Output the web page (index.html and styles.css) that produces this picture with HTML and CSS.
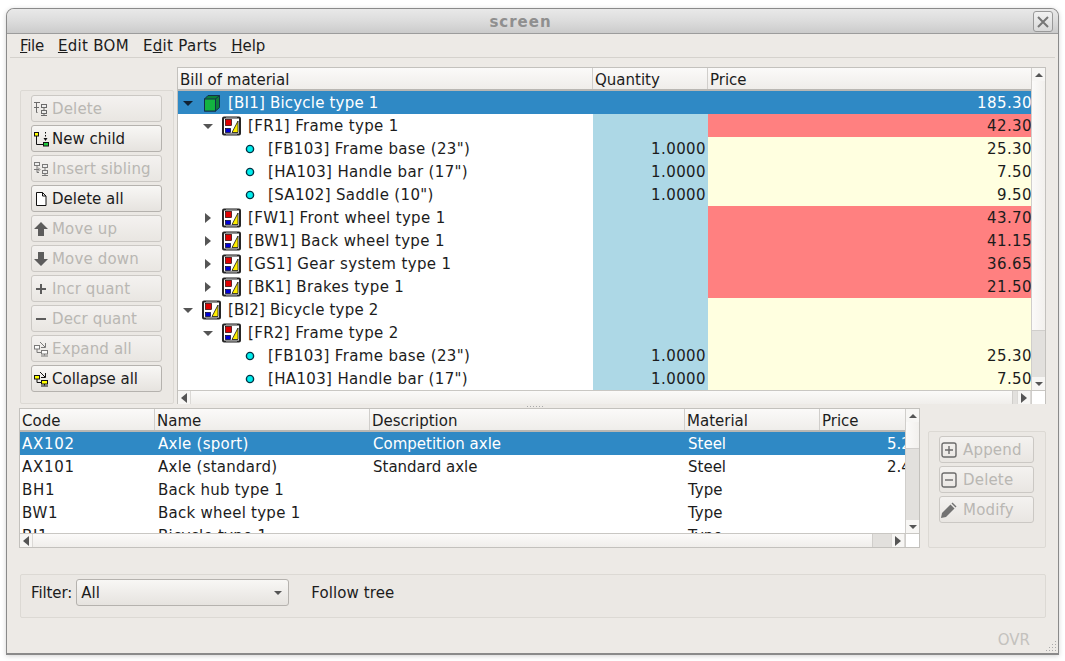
FILE: index.html
```html
<!DOCTYPE html>
<html lang="en">
<head>
  <meta charset="UTF-8">
  <title>screen</title>
  <link rel="stylesheet" href="styles.css">
</head>
<body>
  <svg class="defs" width="0" height="0">
    <symbol id="i-part" viewBox="0 0 20 20">
      <rect x="1" y="1.500" width="17" height="17" rx="1" fill="#fff" stroke="#262626" stroke-width="2"/>
      <path d="M4 1h11M4 19h11" stroke="#8a8a8a" stroke-width="1.500"/>
      <rect x="3.500" y="3.500" width="6" height="6" fill="#e00000" stroke="#200" stroke-width=".7"/>
      <rect x="3.500" y="12.500" width="5" height="4" fill="#0000d8" stroke="#002" stroke-width=".7"/>
      <path d="M16 5v11.500h-6z" fill="#ffee00" stroke="#111" stroke-width=".8"/>
    </symbol>
    <symbol id="i-cube" viewBox="-2 -2 20 20">
      <path d="M.5 4 4 .5h11.500v12L11.500 16H.5z" fill="#0c7f3a" stroke="#12304a" stroke-width="1"/>
      <rect x=".5" y="4" width="11" height="12" fill="#13b341" stroke="#12304a" stroke-width="1"/>
      <path d="M11.500 4 15.500 .5" stroke="#12304a"/>
    </symbol>
    <symbol id="i-dot" viewBox="0 0 10 10">
      <circle cx="5" cy="5" r="3.600" fill="#0ee" stroke="#034" stroke-width="1.400"/>
    </symbol>
    <symbol id="i-tree-del" viewBox="0 0 16 16">
      <path d="M1 1.500h6M3.500 1.500v10h1M1 6.500h5" fill="none" stroke="#555"/>
      <rect x="8.500" y="3.500" width="5" height="3" fill="#eee" stroke="#555"/>
      <rect x="8.500" y="9.500" width="5" height="3" fill="#eee" stroke="#555"/>
      <path d="M11 6.500v3M11 12.500v1.500M8 14.500h6" stroke="#555"/>
    </symbol>
    <symbol id="i-tree-child" viewBox="0 0 16 16">
      <path d="M3.500 5v8.500H10" fill="none" stroke="#111"/>
      <rect x="1.500" y="1.500" width="4" height="3.500" fill="#ff0" stroke="#111"/>
      <rect x="10.500" y="11.500" width="5" height="3.500" fill="#1ec83c" stroke="#111"/>
      <path d="M12.500 1v1.500M12.500 4v1.500" stroke="#111"/>
      <path d="M10.500 7h4l-2 3z" fill="#111"/>
    </symbol>
    <symbol id="i-tree-sib" viewBox="0 0 16 16">
      <rect x="1.500" y="1.500" width="5" height="3" fill="#eee" stroke="#666"/>
      <path d="M4 4.500v7h2M1 8.500h5M5 6.500l2 2-2 2" fill="none" stroke="#666"/>
      <rect x="9.500" y="3.500" width="5" height="3" fill="#eee" stroke="#666"/>
      <rect x="9.500" y="9.500" width="5" height="3" fill="#eee" stroke="#666"/>
      <path d="M12 6.500v3M12 12.500v1.500M9 14.500h6" stroke="#666"/>
    </symbol>
    <symbol id="i-page" viewBox="0 0 16 16">
      <path d="M3.500 1.500h6l3.500 3.500v9.500H3.500zM9.500 1.500V5H13" fill="#fff" stroke="#111"/>
    </symbol>
    <symbol id="i-up" viewBox="0 0 16 16">
      <path d="M8 1 15 8h-4v7H5V8H1z" fill="#444"/>
    </symbol>
    <symbol id="i-down" viewBox="0 0 16 16">
      <path d="M8 15 15 8h-4V1H5v7H1z" fill="#444"/>
    </symbol>
    <symbol id="i-plus" viewBox="0 0 16 16">
      <path d="M7 3h2v4h4v2H9v4H7V9H3V7h4z" fill="#444"/>
    </symbol>
    <symbol id="i-minus" viewBox="0 0 16 16">
      <rect x="3" y="7" width="10" height="2" fill="#444"/>
    </symbol>
    <symbol id="i-expand" viewBox="0 0 16 16">
      <rect x="1.500" y="4.500" width="5" height="3.500" fill="var(--top)" stroke="currentColor"/>
      <rect x="8.500" y="9.500" width="6" height="3.500" fill="var(--bot)" stroke="currentColor"/>
      <path d="M4 8v3.500h4.500M11.500 13v1.500M8 15h7M7 1l5 5M12.500 2v4.500H8" fill="none" stroke="currentColor"/>
    </symbol>
    <symbol id="i-box-plus" viewBox="0 0 16 16">
      <rect x="1" y="1" width="14" height="14" rx="2" fill="none" stroke="#555" stroke-width="1.400"/>
      <path d="M8 4v8M4 8h8" stroke="#555" stroke-width="1.400"/>
    </symbol>
    <symbol id="i-box-minus" viewBox="0 0 16 16">
      <rect x="1" y="1" width="14" height="14" rx="2" fill="none" stroke="#555" stroke-width="1.400"/>
      <path d="M4 8h8" stroke="#555" stroke-width="1.400"/>
    </symbol>
    <symbol id="i-pencil" viewBox="0 0 16 16">
      <path d="M0 16l1-5 8.500-8.500 4 4L5 15z" fill="#5e5e5e"/>
      <path d="M10.500 1.500l1-1 4 4-1 1z" fill="#5e5e5e"/>
    </symbol>
  </svg>

  <div class="window">
    <div class="titlebar">
      <span class="title">screen</span>
      <span class="close">
        <svg width="12" height="12" viewBox="0 0 12 12"><path d="M1 1l10 10M11 1 1 11" stroke="#777" stroke-width="2"/></svg>
      </span>
    </div>

    <div class="menubar">
      <span class="tight"><u>F</u>ile</span>
      <span class="wide"><u>E</u>dit BOM</span>
      <span class="wide">E<u>d</u>it Parts</span>
      <span><u>H</u>elp</span>
    </div>

    <div class="top-area">
      <div class="panel side-tools">
        <button class="btn" disabled><svg class="ic"><use href="#i-tree-del"/></svg>Delete</button>
        <button class="btn"><svg class="ic"><use href="#i-tree-child"/></svg>New child</button>
        <button class="btn" disabled><svg class="ic"><use href="#i-tree-sib"/></svg>Insert sibling</button>
        <button class="btn"><svg class="ic"><use href="#i-page"/></svg>Delete all</button>
        <button class="btn" disabled><svg class="ic"><use href="#i-up"/></svg>Move up</button>
        <button class="btn" disabled><svg class="ic"><use href="#i-down"/></svg>Move down</button>
        <button class="btn" disabled><svg class="ic"><use href="#i-plus"/></svg>Incr quant</button>
        <button class="btn" disabled><svg class="ic"><use href="#i-minus"/></svg>Decr quant</button>
        <button class="btn" disabled><svg class="ic tree-off"><use href="#i-expand"/></svg>Expand all</button>
        <button class="btn"><svg class="ic tree-yellow"><use href="#i-expand"/></svg>Collapse all</button>
      </div>

      <div class="frame bom">
        <div class="head bom-cols">
          <div>Bill of material</div>
          <div>Quantity</div>
          <div>Price</div>
        </div>
        <div class="vbar bom-vbar">
          <div class="sb-btn"><i class="arr up"></i></div>
          <div class="sb-track"><div class="sb-thumb bom-thumb"></div></div>
          <div class="sb-btn"><i class="arr down"></i></div>
        </div>
        <div class="rows bom-rows">
          <div class="row bom-cols selected">
            <div class="name lv0"><i class="arr down dark"></i><svg class="node"><use href="#i-cube"/></svg>[BI1] Bicycle type 1</div>
            <div class="num"></div>
            <div class="num">185.30</div>
          </div>
          <div class="row bom-cols">
            <div class="name lv1"><i class="arr down"></i><svg class="node"><use href="#i-part"/></svg>[FR1] Frame type 1</div>
            <div class="num qty"></div>
            <div class="num red">42.30</div>
          </div>
          <div class="row bom-cols">
            <div class="name lv2"><svg class="dot"><use href="#i-dot"/></svg>[FB103] Frame base (23")</div>
            <div class="num qty">1.0000</div>
            <div class="num yellow">25.30</div>
          </div>
          <div class="row bom-cols">
            <div class="name lv2"><svg class="dot"><use href="#i-dot"/></svg>[HA103] Handle bar (17")</div>
            <div class="num qty">1.0000</div>
            <div class="num yellow">7.50</div>
          </div>
          <div class="row bom-cols">
            <div class="name lv2"><svg class="dot"><use href="#i-dot"/></svg>[SA102] Saddle (10")</div>
            <div class="num qty">1.0000</div>
            <div class="num yellow">9.50</div>
          </div>
          <div class="row bom-cols">
            <div class="name lv1"><i class="arr right"></i><svg class="node"><use href="#i-part"/></svg>[FW1] Front wheel type 1</div>
            <div class="num qty"></div>
            <div class="num red">43.70</div>
          </div>
          <div class="row bom-cols">
            <div class="name lv1"><i class="arr right"></i><svg class="node"><use href="#i-part"/></svg>[BW1] Back wheel type 1</div>
            <div class="num qty"></div>
            <div class="num red">41.15</div>
          </div>
          <div class="row bom-cols">
            <div class="name lv1"><i class="arr right"></i><svg class="node"><use href="#i-part"/></svg>[GS1] Gear system type 1</div>
            <div class="num qty"></div>
            <div class="num red">36.65</div>
          </div>
          <div class="row bom-cols">
            <div class="name lv1"><i class="arr right"></i><svg class="node"><use href="#i-part"/></svg>[BK1] Brakes type 1</div>
            <div class="num qty"></div>
            <div class="num red">21.50</div>
          </div>
          <div class="row bom-cols">
            <div class="name lv0"><i class="arr down"></i><svg class="node"><use href="#i-part"/></svg>[BI2] Bicycle type 2</div>
            <div class="num qty"></div>
            <div class="num yellow"></div>
          </div>
          <div class="row bom-cols">
            <div class="name lv1"><i class="arr down"></i><svg class="node"><use href="#i-part"/></svg>[FR2] Frame type 2</div>
            <div class="num qty"></div>
            <div class="num yellow"></div>
          </div>
          <div class="row bom-cols">
            <div class="name lv2"><svg class="dot"><use href="#i-dot"/></svg>[FB103] Frame base (23")</div>
            <div class="num qty">1.0000</div>
            <div class="num yellow">25.30</div>
          </div>
          <div class="row bom-cols">
            <div class="name lv2"><svg class="dot"><use href="#i-dot"/></svg>[HA103] Handle bar (17")</div>
            <div class="num qty">1.0000</div>
            <div class="num yellow">7.50</div>
          </div>
        </div>
        <div class="hbar">
          <div class="sb-btn"><i class="arr left"></i></div>
          <div class="sb-track"><div class="sb-thumb bom-hthumb"></div></div>
          <div class="sb-btn"><i class="arr right"></i></div>
          <div class="sb-corner"></div>
        </div>
      </div>
    </div>

    <div class="splitter"><span></span><span></span><span></span><span></span><span></span><span></span></div>

    <div class="mid-area">
      <div class="frame parts">
        <div class="head parts-cols">
          <div>Code</div>
          <div>Name</div>
          <div>Description</div>
          <div>Material</div>
          <div>Price</div>
        </div>
        <div class="vbar parts-vbar">
          <div class="sb-btn"><i class="arr up"></i></div>
          <div class="sb-track"><div class="sb-thumb parts-thumb"></div></div>
          <div class="sb-btn"><i class="arr down"></i></div>
        </div>
        <div class="rows parts-rows">
          <div class="row parts-cols selected">
            <div class="code">AX102</div><div class="pname">Axle (sport)</div><div>Competition axle</div><div>Steel</div><div class="clip-num">5.20</div>
          </div>
          <div class="row parts-cols">
            <div class="code">AX101</div><div class="pname">Axle (standard)</div><div>Standard axle</div><div>Steel</div><div class="clip-num">2.40</div>
          </div>
          <div class="row parts-cols">
            <div class="code">BH1</div><div class="pname">Back hub type 1</div><div></div><div>Type</div><div></div>
          </div>
          <div class="row parts-cols">
            <div class="code">BW1</div><div class="pname">Back wheel type 1</div><div></div><div>Type</div><div></div>
          </div>
          <div class="row parts-cols">
            <div class="code">BI1</div><div class="pname">Bicycle type 1</div><div></div><div>Type</div><div></div>
          </div>
        </div>
        <div class="hbar">
          <div class="sb-btn"><i class="arr left"></i></div>
          <div class="sb-track"><div class="sb-thumb parts-hthumb"></div></div>
          <div class="sb-btn"><i class="arr right"></i></div>
          <div class="sb-corner"></div>
        </div>
      </div>

      <div class="panel part-tools">
        <button class="btn" disabled><svg class="ic"><use href="#i-box-plus"/></svg>Append</button>
        <button class="btn" disabled><svg class="ic"><use href="#i-box-minus"/></svg>Delete</button>
        <button class="btn" disabled><svg class="ic"><use href="#i-pencil"/></svg>Modify</button>
      </div>
    </div>

    <div class="panel filter">
      <label class="filter-label">Filter:</label>
      <div class="combo"><span>All</span><i class="arr down"></i></div>
      <span class="follow">Follow tree</span>
    </div>

    <div class="statusbar">
      <span class="ovr">OVR</span>
      <svg class="grip" width="12" height="12" viewBox="0 0 12 12">
        <path d="M10 1h1v1h-1zM10 4h1v1h-1zM7 4h1v1H7zM10 7h1v1h-1zM7 7h1v1H7zM4 7h1v1H4zM10 10h1v1h-1zM7 10h1v1H7zM4 10h1v1H4zM1 10h1v1H1z" fill="#aaa"/>
      </svg>
    </div>
  </div>
</body>
</html>
```

FILE: styles.css
```css
* {
  box-sizing: border-box;
}

html, body {
  margin: 0;
  height: 100%;
  background: #fff;
  overflow: hidden;
}

body {
  padding: 8px 6px 6px 6px;
  font-family: "DejaVu Sans", sans-serif;
  font-size: 15px;
  color: #1c1c1c;
}

.defs {
  position: absolute;
}

.window {
  width: 1053px;
  height: 647px;
  background: #edeae6;
  border: 1px solid #8a8a8a;
  border-bottom-width: 2px;
  border-radius: 8px 8px 0 0;
  box-shadow: 0 1px 5px rgba(0,0,0,0.18);
  display: flex;
  flex-direction: column;
  overflow: hidden;
}

.titlebar {
  height: 25px;
  flex: none;
  padding: 1px 24px 0 0;
  display: flex;
  align-items: center;
  justify-content: center;
  position: relative;
  background: linear-gradient(#e9e9e9, #dcdcdc 50%, #cbcbcb);
  border-bottom: 1px solid #9c9c9c;
}

.title {
  color: #8f8f8f;
  font-weight: bold;
  font-size: 15px;
  letter-spacing: 1px;
}

.close {
  position: absolute;
  right: 5px;
  top: 2px;
  width: 20px;
  height: 21px;
  border: 1px solid #999;
  border-radius: 3px;
  background: linear-gradient(#f1f1f1, #d9d9d9);
  display: flex;
  align-items: center;
  justify-content: center;
}

.menubar {
  height: 24px;
  flex: none;
  margin: 0 3px;
  padding-left: 10px;
  display: flex;
  align-items: center;
  gap: 14px;
  border-bottom: 1px solid #d5d2cd;
}

.tight {
  letter-spacing: -0.3px;
}

.wide {
  letter-spacing: 0.3px;
}

.top-area {
  margin: 9px 12px 0 13px;
  display: flex;
  align-items: flex-end;
  gap: 3px;
}

.panel {
  background: #ebe8e4;
  border: 1px solid #dcd9d4;
  border-radius: 2px;
}

.side-tools {
  width: 154px;
  height: 314px;
  padding: 4px 11px 4px 10px;
  display: flex;
  flex-direction: column;
  gap: 3px;
}

.btn {
  height: 27px;
  flex: none;
  display: flex;
  align-items: center;
  padding: 0 0 0 1px;
  font: inherit;
  color: #1c1c1c;
  background: linear-gradient(#f8f7f5, #e6e3df);
  border: 1px solid #b5b2ae;
  border-radius: 3px;
  text-align: left;
}

.btn:disabled {
  color: #b9b7b3;
  letter-spacing: 0.15px;
  border-color: #cbc8c4;
  background: linear-gradient(#f4f2f0, #e9e6e2);
}

.ic {
  width: 16px;
  height: 16px;
  margin-right: 3px;
  flex: none;
  --top: #fff;
  --bot: #fff;
  color: #111;
}

.btn:disabled .ic {
  opacity: 0.85;
}

.tree-off {
  color: #666;
}

.tree-yellow {
  --top: #ff0;
  --bot: #ff0;
}

.frame {
  position: relative;
  border: 1px solid #c3c1bd;
  background: #fff;
}

.bom {
  width: 869px;
  height: 337px;
}

.head {
  height: 23px;
  grid-template-rows: 21px;
  background: linear-gradient(#fbfaf9, #efedea);
  border-bottom: 2px solid #b9b7b3;
}

.head > div {
  padding: 1px 2px 0;
  line-height: 22px;
  border-right: 1px solid #d0cecb;
  white-space: nowrap;
  overflow: hidden;
}

.bom-cols {
  display: grid;
  grid-template-columns: 415px 115px 324px;
}

.parts-cols {
  display: grid;
  grid-template-columns: 135px 215px 315px 135px 86px;
}

.rows {
  overflow: hidden;
  background: #fff;
}

.bom-rows {
  width: 854px;
  height: 299px;
}

.parts-rows {
  width: 886px;
  height: 101px;
}

.row {
  height: 23px;
  line-height: 23px;
  white-space: nowrap;
}

.row > div {
  overflow: hidden;
  padding-top: 1px;
}

.parts-rows .row > div {
  padding-left: 3px;
}

.parts-rows .row > .code {
  padding-left: 2px;
  letter-spacing: 0.7px;
}

.parts-rows .row > .pname {
  letter-spacing: 0.25px;
}

.selected {
  background: #2f89c5;
  color: #fff;
}

.name {
  display: flex;
  align-items: flex-start;
  letter-spacing: 0.35px;
}

.name svg,
.name .arr {
  align-self: center;
}

.lv0 {
  padding-left: 5px;
  letter-spacing: 0.2px;
}

.lv1 {
  padding-left: 25px;
}

.lv2 {
  padding-left: 67px;
}

.node {
  width: 20px;
  height: 20px;
  margin: 0 6px 0 9px;
  flex: none;
}

.dot {
  width: 10px;
  height: 10px;
  margin-right: 13px;
  flex: none;
}

.num {
  text-align: right;
  letter-spacing: 0.4px;
}

.qty {
  background: #add8e6;
  padding-right: 2px;
}

.red {
  background: #ff8080;
}

.yellow {
  background: #ffffe0;
}

.parts-rows .row > .clip-num {
  padding-left: 67px;
  letter-spacing: 0;
}

.arr {
  display: block;
  width: 0;
  height: 0;
  flex: none;
  border-style: solid;
  border-color: transparent;
}

.arr.down {
  border-width: 5px 5px 0 5px;
  border-top-color: #555;
}

.arr.up {
  border-width: 0 5px 5px 5px;
  border-bottom-color: #555;
}

.arr.right {
  border-width: 5px 0 5px 6px;
  border-left-color: #555;
  margin-left: 2px;
  margin-right: 2px;
}

.arr.left {
  border-width: 5px 6px 5px 0;
  border-right-color: #555;
}

.arr.down.dark {
  border-top-color: #123;
}

.vbar {
  position: absolute;
  top: 0;
  right: 0;
  width: 14px;
  display: flex;
  flex-direction: column;
  background: #e2e0dd;
  border-left: 1px solid #d0cecb;
}

.bom-vbar {
  height: 322px;
}

.parts-vbar {
  height: 124px;
}

.sb-btn {
  width: 13px;
  height: 13px;
  flex: none;
  display: flex;
  align-items: center;
  justify-content: center;
  background: #f7f6f4;
}

.vbar .sb-btn .arr.up {
  border-width: 0 4px 4px 4px;
}

.vbar .sb-btn .arr.down {
  border-width: 4px 4px 0 4px;
}

.sb-track {
  flex: 1;
  background: #e2e0dd;
  position: relative;
}

.vbar .sb-thumb {
  width: 100%;
  background: linear-gradient(90deg, #fbfaf9, #f2f0ed);
  border-bottom: 1px solid #d0cecb;
}

.bom-thumb {
  height: 250px;
}

.parts-thumb {
  height: 27px;
}

.hbar {
  height: 14px;
  display: flex;
  background: #f7f6f4;
  border-top: 1px solid #c9c7c3;
}

.hbar .sb-btn {
  background: #f7f6f4;
  border-right: 1px solid #dbd9d6;
}

.hbar .sb-btn:nth-child(3) {
  width: 14px;
  border-left: 1px solid #dbd9d6;
}

.hbar .sb-track {
  background: #e2e0dd;
  display: flex;
}

.hbar .sb-thumb {
  height: 100%;
  background: linear-gradient(#fbfaf9, #f0eeeb);
  border-right: 1px solid #d0cecb;
}

.bom-hthumb {
  width: 822px;
}

.parts-hthumb {
  width: 840px;
}

.sb-corner {
  width: 14px;
  flex: none;
  background: #fff;
  border-left: 1px solid #d0cecb;
}

.splitter {
  height: 4px;
  flex: none;
  display: flex;
  justify-content: center;
  align-items: center;
  gap: 2px;
  padding-left: 5px;
}

.splitter span {
  width: 1px;
  height: 1px;
  background: #aaa;
}

.mid-area {
  margin: 0 12px;
  display: flex;
  align-items: flex-end;
  gap: 8px;
}

.parts {
  width: 902px;
  height: 140px;
}

.part-tools {
  width: 118px;
  height: 117px;
  padding: 4px 11px 4px 10px;
  display: flex;
  flex-direction: column;
  gap: 3px;
}

.part-tools .ic {
  margin-right: 6px;
}

.filter {
  margin: 26px 12px 0 13px;
  height: 44px;
  flex: none;
  display: flex;
  align-items: flex-start;
  padding: 4px 10px 0;
}

.filter-label {
  margin-right: 4px;
  line-height: 28px;
  letter-spacing: -0.1px;
}

.combo {
  width: 213px;
  height: 27px;
  display: flex;
  align-items: center;
  justify-content: space-between;
  padding: 0 6px 0 4px;
  background: linear-gradient(#f8f7f5, #e6e3df);
  border: 1px solid #b5b2ae;
  border-radius: 3px;
}

.combo .arr {
  border-width: 4px 4px 0 4px;
}

.follow {
  margin-left: 22px;
  line-height: 28px;
  letter-spacing: 0.1px;
}

.statusbar {
  flex: 1;
  display: flex;
  align-items: flex-end;
  justify-content: flex-end;
  padding: 0 1px 1px 0;
}

.ovr {
  color: #c4c2be;
  margin: 0 15px 3px 0;
}
```
